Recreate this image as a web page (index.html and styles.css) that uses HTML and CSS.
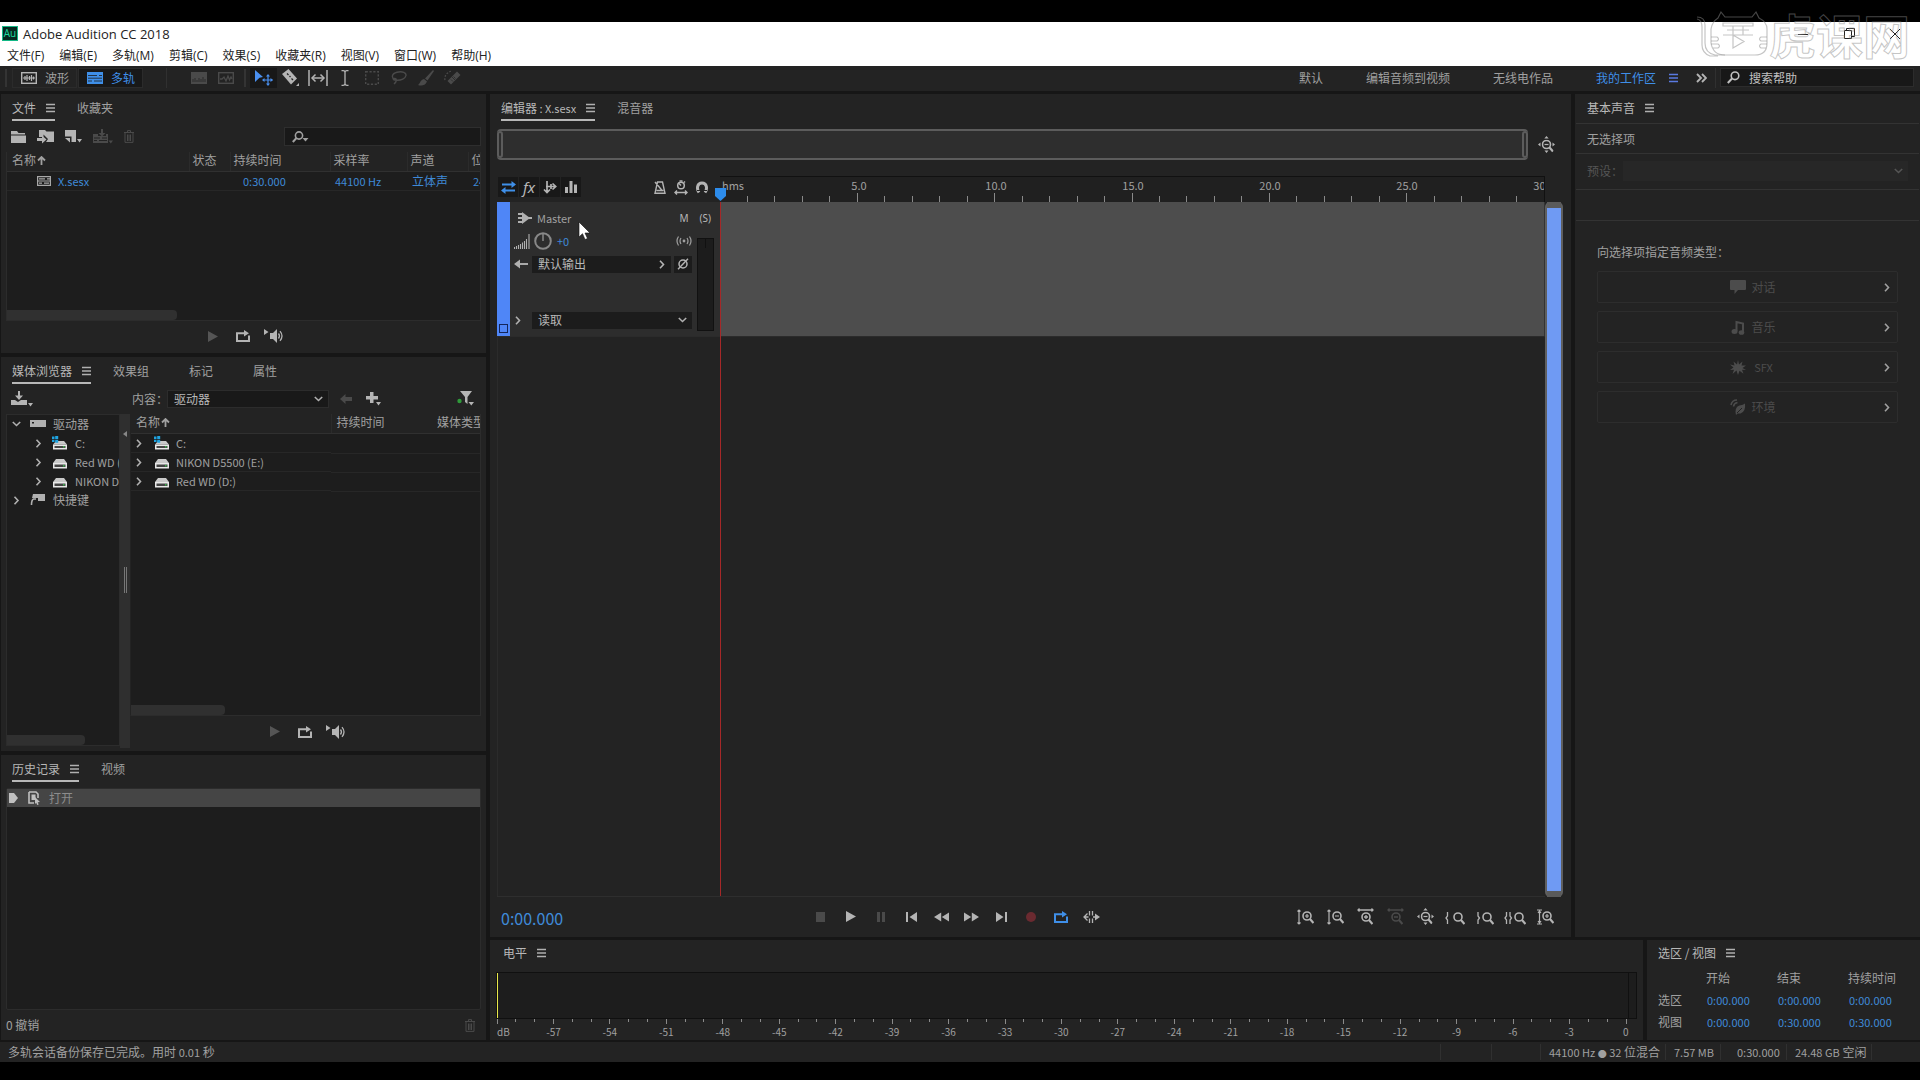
FILE: index.html
```html
<!DOCTYPE html>
<html lang="zh-CN">
<head>
<meta charset="utf-8">
<title>Adobe Audition CC 2018</title>
<link rel="stylesheet" href="styles.css">
</head>
<body>
<svg class="sprite" aria-hidden="true">
  <symbol id="i-menu" viewBox="0 0 9 10"><path d="M0 1.5h9M0 5h9M0 8.5h9" stroke="currentColor" stroke-width="1.6"/></symbol>
  <symbol id="i-wave" viewBox="0 0 16 12"><rect x=".7" y=".7" width="14.6" height="10.6" fill="none" stroke="currentColor" stroke-width="1.4"/><path d="M2 6h12M4 4v4M6 3v6M8.500 4v4M10.500 3v6M12.500 4.500v3" stroke="currentColor" stroke-width="1.200"/></symbol>
  <symbol id="i-multi" viewBox="0 0 16 12"><path fill="currentColor" d="M0 0h16v12H0z"/><path d="M1 3.500h9M12 3.500h3M1 6.200h14M1 9h4M7 9h8" stroke="#1b1b1b" stroke-width=".8"/></symbol>
  <symbol id="i-session" viewBox="0 0 14 10"><path d="M0 .6h14M0 9.400h14M.6 0v10M13.400 0v10M1 5h12M2 2.800h6M10 2.800h3M2 7.200h3M7 7.200h5" stroke="currentColor" stroke-width="1.200"/></symbol>
  <symbol id="i-spectral" viewBox="0 0 16 12"><rect x="0" y="0" width="16" height="12" fill="currentColor"/><path d="M2 7v3M4 6v4M6 8v2M8 6v4M10 7v3M12 5v5M14 7v3" stroke="#232323" stroke-width=".8"/></symbol>
  <symbol id="i-pitch" viewBox="0 0 16 12"><rect x=".7" y=".7" width="14.600" height="10.600" fill="none" stroke="currentColor" stroke-width="1.400"/><path d="M2 7h2l2-2 2 4 2-5 1.500 4L13 5l1 2" fill="none" stroke="currentColor" stroke-width="1.300"/></symbol>
  <symbol id="i-move" viewBox="0 0 18 16"><path fill="currentColor" d="M0 0l8 7-3.500.8L0 12z"/><path d="M13 5.500v9M8.500 10h9" stroke="currentColor" stroke-width="1.200"/><path fill="currentColor" d="M13 4l2 2.500h-4zM13 16l2-2.500h-4zM7 10l2.500-2v4zM18 10l-2.500-2v4z"/></symbol>
  <symbol id="i-razor" viewBox="0 0 17 17"><path fill="currentColor" d="M0 5l6.500-5L15 9.500 9 15.500z"/><path d="M5 4.500l1.500 1.500M7.500 7l1 1M9.500 9.500l1.500 1.500" stroke="#232323" stroke-width="1.300"/><path fill="currentColor" d="M17 14v3h-3z"/></symbol>
  <symbol id="i-stretch" viewBox="0 0 20 16"><path d="M1 0v16M19 0v16M4 8h12" stroke="currentColor" stroke-width="1.500"/><path d="M7.500 4.500L4 8l3.500 3.500M12.500 4.500L16 8l-3.500 3.500" fill="none" stroke="currentColor" stroke-width="1.500"/></symbol>
  <symbol id="i-ibeam" viewBox="0 0 8 16"><path d="M.5.7h1.700Q4 .7 4 2.500 4 .7 5.800.7h1.700M4 2v12M.5 15.300h1.700Q4 15.300 4 13.500q0 1.800 1.800 1.800h1.700" fill="none" stroke="currentColor" stroke-width="1.300"/></symbol>
  <symbol id="i-marquee" viewBox="0 0 14 14"><rect x=".7" y=".7" width="12.600" height="12.600" fill="none" stroke="currentColor" stroke-width="1.400" stroke-dasharray="2.200 1.600"/></symbol>
  <symbol id="i-lasso" viewBox="0 0 16 14"><path d="M4 9C0 7 .5 2.500 6 1.200s9.500.5 9 3.300-5 5-9.500 4.700-3.500-2-1.500-1.700 2 3-1 5.500" fill="none" stroke="currentColor" stroke-width="1.400"/></symbol>
  <symbol id="i-brush" viewBox="0 0 16 16"><path fill="currentColor" d="M15 0l1 1-6.500 9.500-2.500-2zM6 9l3 2.500C7 16 3 16 0 15c2-1 2-5 6-6z"/></symbol>
  <symbol id="i-heal" viewBox="0 0 17 16"><path fill="currentColor" d="M13 1.500l3.500 3.500-9.500 9.500L3.500 11z"/><path d="M1 10C0 6 3 2 8 1" fill="none" stroke="currentColor" stroke-width="1.300" stroke-dasharray="1.800 1.500"/><path d="M8 7l3 3M7 9.500l2 2M9.500 6.500l2 2" stroke="#232323" stroke-width=".7"/></symbol>
  <symbol id="i-more" viewBox="0 0 11 10"><path d="M1 1l4 4-4 4M6 1l4 4-4 4" fill="none" stroke="currentColor" stroke-width="1.900"/></symbol>
  <symbol id="i-search" viewBox="0 0 13 13"><circle cx="8" cy="4.800" r="3.800" fill="none" stroke="currentColor" stroke-width="1.600"/><path d="M5 7.500L.8 12" stroke="currentColor" stroke-width="2"/></symbol>
  <symbol id="i-search-drop" viewBox="0 0 17 12"><circle cx="7" cy="4.500" r="3.600" fill="none" stroke="currentColor" stroke-width="1.600"/><path d="M4.500 7L.8 11" stroke="currentColor" stroke-width="2"/><path fill="currentColor" d="M10.500 7h6l-3 3.500z"/></symbol>
  <symbol id="i-folder" viewBox="0 0 15 12"><path fill="currentColor" d="M0 0h6l1.500 2H14v1.500H0zM0 4.500h15V12H0z"/></symbol>
  <symbol id="i-import" viewBox="0 0 17 14"><path fill="currentColor" d="M2 0h6l1.500 1.500H17V12H9l2-3-4.500-4.500V7H2z"/><path fill="currentColor" d="M0 8h5V5.500L9.500 9.500 5 13.500V11H0z"/></symbol>
  <symbol id="i-new" viewBox="0 0 17 13"><path fill="currentColor" d="M0 0h11v12H6.500V6.500H0z"/><path fill="currentColor" d="M0 8h5v4.500zM12 9h5l-2.500 3.500z"/></symbol>
  <symbol id="i-insert" viewBox="0 0 20 15"><path fill="currentColor" d="M0 5h5v2h8V5h2v9H0zM8 0h2v4h2.500L9 7.500 5.500 4H8zM15.500 11.500H20L17.800 14.500z"/><path d="M1 9h6M9 9h5M1 11.500h3M6 11.500h8" stroke="#232323"/></symbol>
  <symbol id="i-trash" viewBox="0 0 10 13"><path d="M0 2.500h10M3.500 2V.6h3V2M1 3v9.400h8V3M3.500 4.500v6.500M5 4.500v6.500M6.500 4.500v6.500" fill="none" stroke="currentColor" stroke-width="1"/></symbol>
  <symbol id="i-up" viewBox="0 0 9 9"><path d="M4.500 9V2M1 4.500L4.500 1 8 4.500" fill="none" stroke="currentColor" stroke-width="1.800"/></symbol>
  <symbol id="i-play" viewBox="0 0 10 11"><path fill="currentColor" d="M0 0l10 5.500L0 11z"/></symbol>
  <symbol id="i-loop" viewBox="0 0 14 12"><path d="M4 3.200H1V11h12V5.500" fill="none" stroke="currentColor" stroke-width="2"/><path fill="currentColor" d="M4 2.200h4V0l5 3.200-5 3.200V4.200H4z"/></symbol>
  <symbol id="i-speaker" viewBox="0 0 21 14"><path fill="currentColor" d="M0 0l4.500 3L0 6zM6 4h3l4-4v14l-4-4H6z"/><path d="M14.500 4.500q2 2.500 0 5M16 2.200q4 4.800 0 9.600M15 11" fill="none" stroke="currentColor" stroke-width="1.300"/></symbol>
  <symbol id="i-ingest" viewBox="0 0 22 16"><path fill="currentColor" d="M0 9h4l3 2 3-2h6v5H0zM7 0h2v4.500h3L8 9 4 4.500h3zM17 12h5l-2.500 3.500z"/></symbol>
  <symbol id="i-back" viewBox="0 0 12 10"><path fill="currentColor" d="M5.500 0v3H12v4H5.500v3L0 5z"/></symbol>
  <symbol id="i-plus" viewBox="0 0 15 14"><path fill="currentColor" d="M4 0h3.500v4H12v3.500H7.500V11H4V7.500H0V4h4zM10 10h5l-2.500 3.500z"/></symbol>
  <symbol id="i-filter" viewBox="0 0 17 15"><path fill="currentColor" d="M3 0h12l-4.500 6v7l-2.500-2V6zM11.500 11H17l-2.700 3.500z"/><circle cx="2.500" cy="10" r="2.200" fill="#2f9a3a"/></symbol>
  <symbol id="i-chev-r" viewBox="0 0 6 9"><path d="M1 .8l3.500 3.700L1 8.200" fill="none" stroke="currentColor" stroke-width="1.600"/></symbol>
  <symbol id="i-chev-d" viewBox="0 0 9 6"><path d="M.8 1l3.700 3.500L8.200 1" fill="none" stroke="currentColor" stroke-width="1.600"/></symbol>
  <symbol id="i-drives" viewBox="0 0 16 12"><path fill="currentColor" d="M0 2h16v7H0z"/><path fill="#1d1d1d" d="M2 4h2v1.500H2z"/></symbol>
  <symbol id="i-disk" viewBox="0 0 16 14"><path fill="#c9c9c9" d="M4 4h8l3 4H1z"/><path fill="#e8e8e8" d="M1 8h14v5.500H1z"/><path fill="#444" d="M2.500 9.500h11v2.500h-11z"/><path fill="#39b54a" d="M11 10h1.500v1.500H11z"/></symbol>
  <symbol id="i-disk-win" viewBox="0 0 16 14"><path fill="#c9c9c9" d="M4 5h8l3 3.500H1z"/><path fill="#e8e8e8" d="M1 8.500h14v5H1z"/><path fill="#444" d="M2.500 10h11v2h-11z"/><path fill="#39b54a" d="M11 10h1.500v1.500H11z"/><path fill="#1fa3e0" d="M0 .5h2.500v2.500H0zM3.200 0h3v3h-3zM0 3.700h2.500v2.300H0zM3.200 3.700h3v3h-3z"/></symbol>
  <symbol id="i-shortcut" viewBox="0 0 16 14"><path fill="currentColor" d="M3 1h12v7H8V5L2 5z"/><path d="M6 6H3.500Q1.500 7 1.500 12" fill="none" stroke="currentColor" stroke-width="1.600"/></symbol>
  <symbol id="i-state" viewBox="0 0 9 10"><path fill="currentColor" d="M0 0h5l4 5-4 5H0z"/></symbol>
  <symbol id="i-open" viewBox="0 0 13 14"><path d="M1 1h7l2 2v4M1 1v11h5" fill="none" stroke="currentColor" stroke-width="1.600"/><path d="M3.500 3.500h4V9h-4z" fill="currentColor"/><path fill="currentColor" d="M7 6l5 5-2.300.2 1 2.300-1.500.5-1-2.300L7 13z"/></symbol>
  <symbol id="i-swap" viewBox="0 0 15 13"><path d="M1 3.500h11M3 9.500h11" stroke="currentColor" stroke-width="1.800"/><path fill="currentColor" d="M10.500 0L15 3.500 10.500 7zM4.500 6L0 9.500 4.500 13z"/></symbol>
  <symbol id="i-sends" viewBox="0 0 14 13"><path d="M4 0v11M3 5.500h9M1 8.500l3 3 3-3M9.500 2.500l3.200 3-3.200 3M8 3v5" fill="none" stroke="currentColor" stroke-width="1.700"/></symbol>
  <symbol id="i-bars" viewBox="0 0 12 12"><path fill="currentColor" d="M0 6h3v6H0zM4.500 0h3v12h-3zM9 3.500h3V12H9z"/></symbol>
  <symbol id="i-metro" viewBox="0 0 12 13"><path d="M3.500 1h5L11 12.200H1zM1 1l7.500 9M2.500 9.500h7" fill="none" stroke="currentColor" stroke-width="1.400"/></symbol>
  <symbol id="i-snaptime" viewBox="0 0 14 15"><circle cx="7" cy="5.500" r="3.300" fill="none" stroke="currentColor" stroke-width="1.500"/><path d="M5.500 1h3M7 5.500l-2-2M1 12.500h12M3 10.500l-2 2 2 2M11 10.500l2 2-2 2M10 1.500l1 1" fill="none" stroke="currentColor" stroke-width="1.400"/></symbol>
  <symbol id="i-magnet" viewBox="0 0 12 13"><path d="M3 11.500C.5 8 1 2 6 2s5.500 6 3 9.500" fill="none" stroke="currentColor" stroke-width="3"/><path d="M1 9.500h4.500M6.500 9.500H11" stroke="#232323"/></symbol>
  <symbol id="i-bus" viewBox="0 0 14 12"><path d="M0 2h5M0 6h14M0 10h5" stroke="currentColor" stroke-width="1.900"/><path fill="currentColor" d="M4 0l8 6-8 6z"/></symbol>
  <symbol id="i-signal" viewBox="0 0 16 15"><path d="M.5 13v2M2.500 12v3M4.500 11v4M6.500 10v5M8.500 8.500V15M10.500 7v8M12.500 5v10M15 0v15" stroke="currentColor" stroke-width="1.100"/></symbol>
  <symbol id="i-knob" viewBox="0 0 18 18"><circle cx="9" cy="9" r="7.800" fill="none" stroke="currentColor" stroke-width="2"/><path d="M9 2v7" stroke="currentColor" stroke-width="1.500"/></symbol>
  <symbol id="i-arrow-l" viewBox="0 0 14 10"><path d="M2 5h12" stroke="currentColor" stroke-width="1.900"/><path fill="currentColor" d="M6 .5v9L0 5z"/></symbol>
  <symbol id="i-monitor" viewBox="0 0 16 10"><circle cx="8" cy="5" r="1.400" fill="currentColor"/><path d="M5 2q-2 3 0 6M11 2q2 3 0 6M2.500.5q-3 4.500 0 9M13.500.5q3 4.500 0 9" fill="none" stroke="currentColor" stroke-width="1.200"/></symbol>
  <symbol id="i-phase" viewBox="0 0 12 12"><circle cx="6" cy="6" r="4" fill="none" stroke="currentColor" stroke-width="1.500"/><path d="M11 .8L1 11.200" stroke="currentColor" stroke-width="1.400"/></symbol>
  <symbol id="i-stop" viewBox="0 0 10 10"><path fill="currentColor" d="M0 0h9v10H0z"/></symbol>
  <symbol id="i-pause" viewBox="0 0 9 10"><path fill="currentColor" d="M0 0h3v10H0zM5 0h3v10H5z"/></symbol>
  <symbol id="i-first" viewBox="0 0 11 10"><path fill="currentColor" d="M0 0h2v10H0zM11 0v10L3.500 5z"/></symbol>
  <symbol id="i-last" viewBox="0 0 11 10"><path fill="currentColor" d="M9 0h2v10H9zM0 0l7.500 5L0 10z"/></symbol>
  <symbol id="i-rew" viewBox="0 0 15 10"><path fill="currentColor" d="M7.200 .5v9L0 5zM15 .5v9L7.800 5z"/></symbol>
  <symbol id="i-ff" viewBox="0 0 15 10"><path fill="currentColor" d="M0 .5v9L7.200 5zM7.800 .5v9L15 5z"/></symbol>
  <symbol id="i-rec" viewBox="0 0 10 10"><circle cx="5" cy="5" r="5" fill="currentColor"/></symbol>
  <symbol id="i-skip" viewBox="0 0 17 12"><path d="M6.500 0v4.500M6.500 7.500V12M9.500 0v4.500M9.500 7.500V12M4.500 2.500L1 6l3.500 3.500M1 6h4.500M10 6h4" fill="none" stroke="currentColor" stroke-width="1.300"/><path fill="currentColor" d="M12 2.500L17 6l-5 3.500z"/></symbol>
  <symbol id="i-lens" viewBox="0 0 12 13"><circle cx="5" cy="5" r="4" fill="none" stroke="currentColor" stroke-width="1.600"/><path d="M8 8l3.500 4" stroke="currentColor" stroke-width="2.200"/></symbol>
  <symbol id="i-zin-v" viewBox="0 0 17 16"><use href="#i-lens" x="5" y="2" width="12" height="13"/><path d="M8 7h4M10 5v4M2 1v14M.5 2.500L2 1l1.500 1.500M.5 13.500L2 15l1.500-1.500" fill="none" stroke="currentColor" stroke-width="1.200"/></symbol>
  <symbol id="i-zout-v" viewBox="0 0 17 16"><use href="#i-lens" x="5" y="2" width="12" height="13"/><path d="M8 7h4M2 1v14M.5 2.500L2 1l1.500 1.500M.5 13.500L2 15l1.500-1.500" fill="none" stroke="currentColor" stroke-width="1.200"/></symbol>
  <symbol id="i-zin-h" viewBox="0 0 17 17"><use href="#i-lens" x="4" y="4" width="12" height="13"/><path d="M7 9h4M9 7v4M1 2h15M2.500.5L1 2l1.500 1.500M14.500.5L16 2l-1.500 1.500" fill="none" stroke="currentColor" stroke-width="1.300"/></symbol>
  <symbol id="i-zout-h" viewBox="0 0 17 17"><use href="#i-lens" x="4" y="4" width="12" height="13"/><path d="M7 9h4M1 2h15M2.500.5L1 2l1.500 1.500M14.500.5L16 2l-1.500 1.500" fill="none" stroke="currentColor" stroke-width="1.300"/></symbol>
  <symbol id="i-zfull" viewBox="0 0 17 17"><use href="#i-lens" x="3.500" y="3.500" width="12" height="13"/><path d="M6.500 8.500h4" stroke="currentColor" stroke-width="1.200"/><path fill="currentColor" d="M8.500 0l2.200 2.500H6.300zM8.500 17l2-2.500h-4zM0 8.500L2.500 6.500v4zM17 8.500l-2.500-2v4z"/></symbol>
  <symbol id="i-zin-pt" viewBox="0 0 20 16"><use href="#i-lens" x="8" y="3" width="12" height="13"/><path d="M2.500 3v4L1 9l1.500 2v4" fill="none" stroke="currentColor" stroke-width="1.300"/></symbol>
  <symbol id="i-zout-pt" viewBox="0 0 17 16"><use href="#i-lens" x="5" y="3" width="12" height="13"/><path d="M1 3v4l1.500 2L1 11v4" fill="none" stroke="currentColor" stroke-width="1.300"/></symbol>
  <symbol id="i-zsel" viewBox="0 0 22 16"><use href="#i-lens" x="10" y="3" width="12" height="13"/><path d="M2.500 3v4L1 9l1.500 2v4M6 3v4l1.500 2L6 11v4" fill="none" stroke="currentColor" stroke-width="1.300"/></symbol>
  <symbol id="i-ztrack" viewBox="0 0 17 16"><use href="#i-lens" x="5" y="2" width="12" height="13"/><path d="M8 7h4M10 5v4M2.500 1v14M0 1h5M0 15h5M1 4l1.500-2L4 4M1 12l1.500 2L4 12" fill="none" stroke="currentColor" stroke-width="1.200"/></symbol>
  <symbol id="i-bubble" viewBox="0 0 16 15"><path fill="currentColor" d="M1 0h14q1 0 1 1v8q0 1-1 1H8l-3.500 4V10H1q-1 0-1-1V1q0-1 1-1z"/></symbol>
  <symbol id="i-music" viewBox="0 0 16 15"><path d="M6.500 11V2L13 3.500v8" fill="none" stroke="currentColor" stroke-width="2"/><ellipse cx="4.500" cy="11.500" rx="3" ry="2.500" fill="currentColor"/><ellipse cx="11.500" cy="12.500" rx="2.800" ry="2.300" fill="currentColor"/></symbol>
  <symbol id="i-burst" viewBox="0 0 16 15"><path fill="currentColor" d="M8 0l1 4.500L12.500 1.500 11.500 5.500 16 5.500l-3.500 2.500L16 10l-4-.3 1.500 4-4-3L8 15l-1.500-4.500L2.500 14 4 9.700 0 10l3.500-2.500L0 4.500l4.500 1L3.500 1.500 7 4.500z"/></symbol>
  <symbol id="i-leaf" viewBox="0 0 16 16"><path d="M1 6q1-5 6-5M3.500 7.500q.5-3.500 4-4" fill="none" stroke="currentColor" stroke-width="1.600"/><path fill="currentColor" d="M15 4.500q1 8-4.500 10H7.500L6 16l-.5-3q0-5.500 4-6.500Q13.500 6 15 4.500z"/><path d="M7 14l5-5" stroke="#232323"/></symbol>
</svg>

<div class="app">
  <header class="titlebar">
    <div class="title"><span class="logo">Au</span><h1>Adobe Audition CC 2018</h1></div>
    <div class="winbtns">
      <button aria-label="最小化"><svg width="10" height="10" viewBox="0 0 10 10"><path d="M0 5.500h10" stroke="#222"/></svg></button>
      <button aria-label="还原"><svg width="11" height="11" viewBox="0 0 11 11"><path d="M.5 2.500h7v8h-7zM2.500 2.500v-2h8v8h-3" fill="none" stroke="#222"/></svg></button>
      <button aria-label="关闭"><svg width="10" height="10" viewBox="0 0 10 10"><path d="M0 0l10 10M10 0L0 10" stroke="#222"/></svg></button>
    </div>
  </header>
  <nav class="menubar">
    <button>文件(F)</button><button>编辑(E)</button><button>多轨(M)</button><button>剪辑(C)</button><button>效果(S)</button><button>收藏夹(R)</button><button>视图(V)</button><button>窗口(W)</button><button>帮助(H)</button>
  </nav>

  <div class="toolbar">
    <i class="grip"></i>
    <div class="modes">
      <button class="mode"><svg width="16" height="12"><use href="#i-wave"/></svg>波形</button>
      <button class="mode on"><svg width="16" height="12"><use href="#i-multi"/></svg>多轨</button>
    </div>
    <i class="vsep wide"></i>
    <div class="tools views">
      <button class="dim" aria-label="频谱"><svg width="16" height="12"><use href="#i-spectral"/></svg></button>
      <button class="dim" aria-label="音高"><svg width="16" height="12"><use href="#i-pitch"/></svg></button>
    </div>
    <i class="grip"></i>
    <div class="tools">
      <button class="on" aria-label="移动"><svg width="18" height="16"><use href="#i-move"/></svg></button>
      <button aria-label="切断"><svg width="17" height="17"><use href="#i-razor"/></svg></button>
      <button aria-label="滑动"><svg width="20" height="16"><use href="#i-stretch"/></svg></button>
      <button aria-label="时间选择"><svg width="8" height="16"><use href="#i-ibeam"/></svg></button>
      <button class="dim" aria-label="框选"><svg width="14" height="14"><use href="#i-marquee"/></svg></button>
      <button class="dim" aria-label="套索"><svg width="16" height="14"><use href="#i-lasso"/></svg></button>
      <button class="dim" aria-label="画笔"><svg width="16" height="16"><use href="#i-brush"/></svg></button>
      <button class="dim" aria-label="污点修复"><svg width="17" height="16"><use href="#i-heal"/></svg></button>
    </div>
    <div class="workspaces">
      <button>默认</button><button>编辑音频到视频</button><button>无线电作品</button>
      <button class="on">我的工作区<svg width="9" height="10"><use href="#i-menu"/></svg></button>
    </div>
    <button class="more" aria-label="更多"><svg width="11" height="10"><use href="#i-more"/></svg></button>
    <i class="vsep"></i>
    <label class="help-search"><svg width="13" height="13"><use href="#i-search"/></svg><input type="text" placeholder="搜索帮助" aria-label="搜索帮助"></label>
  </div>

  <main class="workspace">
    <div class="left">
      <section class="panel files">
        <div class="tabs"><button class="tab on">文件<svg width="9" height="10"><use href="#i-menu"/></svg></button><button class="tab">收藏夹</button></div>
        <div class="bar">
          <div class="bar-icons">
            <button aria-label="打开"><svg width="15" height="12"><use href="#i-folder"/></svg></button>
            <button aria-label="导入"><svg width="17" height="14"><use href="#i-import"/></svg></button>
            <button aria-label="新建"><svg width="17" height="13"><use href="#i-new"/></svg></button>
            <button class="dim" aria-label="插入"><svg width="20" height="15"><use href="#i-insert"/></svg></button>
            <button class="dim" aria-label="删除"><svg width="10" height="13"><use href="#i-trash"/></svg></button>
          </div>
          <label class="file-search"><svg width="17" height="12"><use href="#i-search-drop"/></svg><input type="text" aria-label="搜索文件"></label>
        </div>
        <div class="list file-list">
          <table>
            <colgroup><col class="c-name"><col class="c-state"><col class="c-time"><col class="c-rate"><col class="c-chan"><col></colgroup>
            <thead><tr><th>名称<svg width="9" height="9"><use href="#i-up"/></svg></th><th>状态</th><th>持续时间</th><th>采样率</th><th>声道</th><th>位</th></tr></thead>
            <tbody><tr><td class="fname"><svg width="14" height="10"><use href="#i-session"/></svg><span>X.sesx</span></td><td></td><td class="num">0:30.000</td><td class="num">44100 Hz</td><td>立体声</td><td class="num">24</td></tr></tbody>
          </table>
          <i class="hscroll"></i>
        </div>
        <div class="preview">
          <button class="dim" aria-label="播放"><svg width="10" height="11"><use href="#i-play"/></svg></button>
          <button aria-label="循环"><svg width="14" height="12"><use href="#i-loop"/></svg></button>
          <button aria-label="自动播放"><svg width="21" height="14"><use href="#i-speaker"/></svg></button>
        </div>
      </section>

      <section class="panel media">
        <div class="tabs"><button class="tab on">媒体浏览器<svg width="9" height="10"><use href="#i-menu"/></svg></button><button class="tab">效果组</button><button class="tab">标记</button><button class="tab">属性</button></div>
        <div class="bar media-bar">
          <button class="ingest" aria-label="导入"><svg width="22" height="16"><use href="#i-ingest"/></svg></button>
          <label for="drive">内容：</label>
          <span class="select"><select id="drive"><option>驱动器</option></select><svg width="9" height="6"><use href="#i-chev-d"/></svg></span>
          <button class="dim" aria-label="后退"><svg width="12" height="10"><use href="#i-back"/></svg></button>
          <button aria-label="添加"><svg width="15" height="14"><use href="#i-plus"/></svg></button>
          <button class="filter" aria-label="过滤"><svg width="17" height="15"><use href="#i-filter"/></svg></button>
        </div>
        <div class="split">
          <div class="tree">
            <ul>
              <li class="top"><svg class="tw" width="9" height="6"><use href="#i-chev-d"/></svg><svg width="16" height="12"><use href="#i-drives"/></svg><span>驱动器</span></li>
              <li class="sub"><svg class="tw" width="6" height="9"><use href="#i-chev-r"/></svg><svg width="16" height="14"><use href="#i-disk-win"/></svg><span class="lat">C:</span></li>
              <li class="sub"><svg class="tw" width="6" height="9"><use href="#i-chev-r"/></svg><svg width="16" height="14"><use href="#i-disk"/></svg><span class="lat">Red WD (D:)</span></li>
              <li class="sub"><svg class="tw" width="6" height="9"><use href="#i-chev-r"/></svg><svg width="16" height="14"><use href="#i-disk"/></svg><span class="lat">NIKON D5500 (E:)</span></li>
              <li class="top"><svg class="tw" width="6" height="9"><use href="#i-chev-r"/></svg><svg width="16" height="14"><use href="#i-shortcut"/></svg><span>快捷键</span></li>
            </ul>
            <i class="hscroll"></i>
          </div>
          <div class="divider"><svg width="4" height="6" viewBox="0 0 4 6"><path fill="#888" d="M4 0v6L0 3z"/></svg><i></i></div>
          <div class="drives">
            <div class="list drive-list">
              <table>
                <colgroup><col class="d-name"><col class="d-time"><col></colgroup>
                <thead><tr><th>名称<svg width="9" height="9"><use href="#i-up"/></svg></th><th>持续时间</th><th>媒体类型</th></tr></thead>
                <tbody>
                  <tr><td class="drive"><svg width="6" height="9"><use href="#i-chev-r"/></svg><svg width="16" height="14"><use href="#i-disk-win"/></svg><span>C:</span></td><td></td><td></td></tr>
                  <tr><td class="drive"><svg width="6" height="9"><use href="#i-chev-r"/></svg><svg width="16" height="14"><use href="#i-disk"/></svg><span>NIKON D5500 (E:)</span></td><td></td><td></td></tr>
                  <tr><td class="drive"><svg width="6" height="9"><use href="#i-chev-r"/></svg><svg width="16" height="14"><use href="#i-disk"/></svg><span>Red WD (D:)</span></td><td></td><td></td></tr>
                </tbody>
              </table>
              <i class="hscroll"></i>
            </div>
            <div class="preview">
              <button class="dim" aria-label="播放"><svg width="10" height="11"><use href="#i-play"/></svg></button>
              <button aria-label="循环"><svg width="14" height="12"><use href="#i-loop"/></svg></button>
              <button aria-label="自动播放"><svg width="21" height="14"><use href="#i-speaker"/></svg></button>
            </div>
          </div>
        </div>
      </section>

      <section class="panel history">
        <div class="tabs"><button class="tab on">历史记录<svg width="9" height="10"><use href="#i-menu"/></svg></button><button class="tab">视频</button></div>
        <ul class="history-list"><li><svg width="9" height="10"><use href="#i-state"/></svg><svg width="13" height="14"><use href="#i-open"/></svg><span>打开</span></li></ul>
        <div class="undo"><span>0 撤销</span><button class="dim" aria-label="删除"><svg width="10" height="13"><use href="#i-trash"/></svg></button></div>
      </section>
    </div>

    <div class="right">
      <div class="upper">
        <section class="panel editor">
          <div class="tabs"><button class="tab on"><span>编辑器<span class="lat"> : X.sesx</span></span><svg width="9" height="10"><use href="#i-menu"/></svg></button><button class="tab">混音器</button></div>
          <div class="navrow">
            <div class="navigator"><i></i><i></i></div>
            <button aria-label="全部缩小"><svg width="17" height="17"><use href="#i-zfull"/></svg></button>
          </div>
          <div class="session">
            <div class="tracks">
              <div class="head">
                <div class="track-tools">
                  <button class="blue" aria-label="输入输出"><svg width="15" height="13"><use href="#i-swap"/></svg></button>
                  <button class="fx" aria-label="效果">fx</button>
                  <button aria-label="发送"><svg width="14" height="13"><use href="#i-sends"/></svg></button>
                  <button aria-label="EQ"><svg width="12" height="12"><use href="#i-bars"/></svg></button>
                </div>
                <div class="snap-tools">
                  <button aria-label="节拍器"><svg width="12" height="13"><use href="#i-metro"/></svg></button>
                  <button aria-label="时间"><svg width="14" height="15"><use href="#i-snaptime"/></svg></button>
                  <button aria-label="对齐"><svg width="12" height="13"><use href="#i-magnet"/></svg></button>
                </div>
              </div>
              <div class="ruler">
                <div class="labels"><span class="hms">hms</span><span>5.0</span><span>10.0</span><span>15.0</span><span>20.0</span><span>25.0</span><span>30.0</span></div>
                <svg class="ticks" viewBox="0 0 30 8" preserveAspectRatio="none"><path d="M1 3v5M2 3v5M3 3v5M4 3v5M5 0v8M6 3v5M7 3v5M8 3v5M9 3v5M10 0v8M11 3v5M12 3v5M13 3v5M14 3v5M15 0v8M16 3v5M17 3v5M18 3v5M19 3v5M20 0v8M21 3v5M22 3v5M23 3v5M24 3v5M25 0v8M26 3v5M27 3v5M28 3v5M29 3v5"/></svg>
              </div>
              <div class="track">
                <div class="stripe"><i></i></div>
                <div class="track-ctl">
                  <div class="line"><svg width="14" height="12"><use href="#i-bus"/></svg><span class="tname">Master</span><button class="ms">M</button><button class="ms">(S)</button></div>
                  <div class="body">
                    <div class="ctl-rows">
                      <div class="line vol"><svg width="16" height="15"><use href="#i-signal"/></svg><svg width="18" height="18"><use href="#i-knob"/></svg><span class="gain">+0</span><svg class="end" width="16" height="10"><use href="#i-monitor"/></svg></div>
                      <div class="line"><svg width="14" height="10"><use href="#i-arrow-l"/></svg><button class="field">默认输出<svg width="6" height="9"><use href="#i-chev-r"/></svg></button><button class="phase" aria-label="反相"><svg width="12" height="12"><use href="#i-phase"/></svg></button></div>
                      <div class="line auto"><svg class="exp" width="6" height="9"><use href="#i-chev-r"/></svg><span class="select"><select aria-label="自动化模式"><option>读取</option></select><svg width="9" height="6"><use href="#i-chev-d"/></svg></span></div>
                    </div>
                    <div class="vu"><i></i></div>
                  </div>
                </div>
              </div>
              <div class="lane"></div>
              <div class="void"></div>
              <div class="timeline"></div>
              <div class="playhead"><svg width="11" height="13" viewBox="0 0 11 13"><path fill="#2d8ceb" d="M0 0h11v8l-5.500 5L0 8z"/></svg></div>
            </div>
            <div class="vscroll"><i></i><i></i></div>
          </div>
          <div class="transport">
            <output>0:00.000</output>
            <div class="play-btns">
              <button class="dim" aria-label="停止"><svg width="10" height="10"><use href="#i-stop"/></svg></button>
              <button aria-label="播放"><svg width="10" height="11"><use href="#i-play"/></svg></button>
              <button class="dim" aria-label="暂停"><svg width="9" height="10"><use href="#i-pause"/></svg></button>
              <button aria-label="上一个"><svg width="11" height="10"><use href="#i-first"/></svg></button>
              <button aria-label="快退"><svg width="15" height="10"><use href="#i-rew"/></svg></button>
              <button aria-label="快进"><svg width="15" height="10"><use href="#i-ff"/></svg></button>
              <button aria-label="下一个"><svg width="11" height="10"><use href="#i-last"/></svg></button>
              <button class="rec" aria-label="录制"><svg width="10" height="10"><use href="#i-rec"/></svg></button>
              <button class="blue" aria-label="循环播放"><svg width="14" height="12"><use href="#i-loop"/></svg></button>
              <button aria-label="跳过所选"><svg width="17" height="12"><use href="#i-skip"/></svg></button>
            </div>
            <div class="zoom-btns">
              <button aria-label="放大振幅"><svg width="17" height="16"><use href="#i-zin-v"/></svg></button>
              <button aria-label="缩小振幅"><svg width="17" height="16"><use href="#i-zout-v"/></svg></button>
              <button aria-label="放大时间"><svg width="17" height="17"><use href="#i-zin-h"/></svg></button>
              <button class="dim" aria-label="缩小时间"><svg width="17" height="17"><use href="#i-zout-h"/></svg></button>
              <button aria-label="全部缩小"><svg width="17" height="17"><use href="#i-zfull"/></svg></button>
              <button aria-label="放大入点"><svg width="20" height="16"><use href="#i-zin-pt"/></svg></button>
              <button aria-label="放大出点"><svg width="17" height="16"><use href="#i-zout-pt"/></svg></button>
              <button aria-label="缩放至选区"><svg width="22" height="16"><use href="#i-zsel"/></svg></button>
              <button aria-label="缩放所选音轨"><svg width="17" height="16"><use href="#i-ztrack"/></svg></button>
            </div>
          </div>
          <svg class="cursor" width="13" height="20" viewBox="0 0 13 20"><path fill="#fff" stroke="#111" stroke-width=".6" d="M1 1v15l3.500-3.300L7 18.500l2.500-1L7 12h5z"/></svg>
        </section>

        <section class="panel sound">
          <div class="tabs"><button class="tab">基本声音<svg width="9" height="10"><use href="#i-menu"/></svg></button></div>
          <div class="nosel">无选择项</div>
          <div class="preset"><label for="preset">预设：</label><span class="select"><select id="preset" disabled></select><svg width="9" height="6"><use href="#i-chev-d"/></svg></span></div>
          <div class="blank"></div>
          <div class="types">
            <p>向选择项指定音频类型：</p>
            <button><svg width="16" height="15"><use href="#i-bubble"/></svg><span>对话</span><svg class="go" width="6" height="9"><use href="#i-chev-r"/></svg></button>
            <button><svg width="16" height="15"><use href="#i-music"/></svg><span>音乐</span><svg class="go" width="6" height="9"><use href="#i-chev-r"/></svg></button>
            <button><svg width="16" height="15"><use href="#i-burst"/></svg><span class="lat">SFX</span><svg class="go" width="6" height="9"><use href="#i-chev-r"/></svg></button>
            <button><svg width="16" height="16"><use href="#i-leaf"/></svg><span>环境</span><svg class="go" width="6" height="9"><use href="#i-chev-r"/></svg></button>
          </div>
        </section>
      </div>

      <div class="lower">
        <section class="panel levels">
          <div class="tabs"><button class="tab">电平<svg width="9" height="10"><use href="#i-menu"/></svg></button></div>
          <div class="meter"><i class="peak"></i><i class="clip"></i></div>
          <div class="scale">
            <svg class="ticks" viewBox="0 0 60 5" preserveAspectRatio="none"><path d="M0 0v5M1 0v3M2 0v3M3 0v5M4 0v3M5 0v3M6 0v5M7 0v3M8 0v3M9 0v5M10 0v3M11 0v3M12 0v5M13 0v3M14 0v3M15 0v5M16 0v3M17 0v3M18 0v5M19 0v3M20 0v3M21 0v5M22 0v3M23 0v3M24 0v5M25 0v3M26 0v3M27 0v5M28 0v3M29 0v3M30 0v5M31 0v3M32 0v3M33 0v5M34 0v3M35 0v3M36 0v5M37 0v3M38 0v3M39 0v5M40 0v3M41 0v3M42 0v5M43 0v3M44 0v3M45 0v5M46 0v3M47 0v3M48 0v5M49 0v3M50 0v3M51 0v5M52 0v3M53 0v3M54 0v5M55 0v3M56 0v3M57 0v5M58 0v3M59 0v3M60 0v5"/></svg>
            <div class="labels"><span class="db">dB</span><span>-57</span><span>-54</span><span>-51</span><span>-48</span><span>-45</span><span>-42</span><span>-39</span><span>-36</span><span>-33</span><span>-30</span><span>-27</span><span>-24</span><span>-21</span><span>-18</span><span>-15</span><span>-12</span><span>-9</span><span>-6</span><span>-3</span><span>0</span></div>
          </div>
        </section>
        <section class="panel selview">
          <div class="tabs"><button class="tab">选区 / 视图<svg width="9" height="10"><use href="#i-menu"/></svg></button></div>
          <table>
            <thead><tr><td></td><th>开始</th><th>结束</th><th>持续时间</th></tr></thead>
            <tbody>
              <tr><th>选区</th><td>0:00.000</td><td>0:00.000</td><td>0:00.000</td></tr>
              <tr><th>视图</th><td>0:00.000</td><td>0:30.000</td><td>0:30.000</td></tr>
            </tbody>
          </table>
        </section>
      </div>
    </div>
  </main>

  <footer class="status">
    <span class="msg">多轨会话备份保存已完成。用时 <span class="lat">0.01</span> 秒</span>
    <span class="cell s1"></span><span class="cell s2"></span>
    <span class="cell s3"><span class="lat">44100 Hz <small>●</small> 32</span> 位混合</span>
    <span class="cell s4 lat">7.57 MB</span>
    <span class="cell s5 lat">0:30.000</span>
    <span class="cell s6"><span class="lat">24.48 GB</span> 空闲</span>
    <span class="cell s7"></span>
  </footer>
</div>

<div class="watermark" aria-hidden="true">
  <svg width="72" height="48" viewBox="0 0 72 48"><g fill="none" stroke="currentColor" stroke-width="1.200"><path d="M0 7q8 0 8 8v18q0 10 10 12h10M0 9q5 1 5 8v18q0 8 8 11h8"/><path d="M21 8l3-6 4 5h27l4-5 3 6q8 4 8 11v14q0 12-12 12H28q-12 0-14-12V19q1-7 7-11z"/><path d="M26 13h30v3H26zM30 20h22M26 25h30M36 16v9M46 16v9M14 27h6q3 2 0 4h-6M14 34h7q3 2 0 4h-5M70 27h-6q-3 2 0 4h6M70 34h-6q-3 2 0 4h5M36 25v13l11-6.500z"/></g></svg>
  <span>虎课网</span>
</div>
</body>
</html>
```

FILE: styles.css
```css
* { box-sizing: border-box; }
body {
  margin: 0;
  background: #000;
  color: #a0a0a0;
  font: 12px/18px "Noto Sans CJK SC", "Noto Sans", sans-serif;
}
button, input, select {
  font: inherit;
  color: inherit;
  background: none;
  border: 0;
  padding: 0;
  margin: 0;
}
button { display: flex; align-items: center; justify-content: center; white-space: nowrap; }
input, select { min-width: 0; outline: 0; }
select { appearance: none; }
select:disabled { opacity: 1; }
svg { display: block; flex: none; }
ul { list-style: none; margin: 0; padding: 0; }
table { border-collapse: collapse; table-layout: fixed; }
th, td { padding: 0; font-weight: 400; text-align: left; white-space: nowrap; }
button svg { color: #b4b4b4; }
button.dim svg { color: #4a4a4a; }
button.blue svg { color: #3f8fe8; }
.sprite { position: absolute; width: 0; height: 0; }
.lat { font-size: 11px; white-space: pre; }

.app {
  display: flex;
  flex-direction: column;
  min-height: 100vh;
  padding: 22px 0 18px;
}

/* title bar and menus */
.titlebar {
  display: flex;
  justify-content: space-between;
  height: 23px;
  background: #fff;
  color: #222;
}
.title { display: flex; align-items: center; gap: 5px; padding-left: 2px; }
.title h1 { margin: 0; font: 13px/20px "Open Sans", sans-serif; }
.logo {
  width: 16px;
  height: 15px;
  border: 1px solid #12b886;
  background: #06281f;
  color: #20d9a0;
  font: 10px/12px "Open Sans", sans-serif;
  text-align: center;
}
.winbtns { display: flex; padding-right: 2px; }
.winbtns button { width: 46px; }
.menubar {
  display: flex;
  gap: 15px;
  height: 21px;
  padding-left: 7px;
  background: #fff;
  color: #222;
}
.menubar button { font: 12px/18px "Open Sans", "Noto Sans CJK SC", sans-serif; }

/* tool bar */
.toolbar {
  display: flex;
  align-items: center;
  height: 25px;
  padding: 0 6px 2px 5px;
  background: #232323;
}
.grip { width: 2px; height: 18px; background: #343434; }
.vsep { width: 1px; height: 20px; background: #303030; }
.vsep.wide { margin: 0 18px 0 23px; }
.modes { display: flex; gap: 1px; margin-left: 5px; }
.mode { width: 65px; height: 20px; gap: 8px; padding-left: 1px; border: 1px solid #2b2b2b; }
.mode.on { color: #3f8fe8; background: #181818; }
.mode.on svg { color: #3f8fe8; }
.tools { display: flex; margin-left: 4px; }
.tools button { width: 27px; height: 20px; }
.tools .on { background: #181818; }
.tools .on svg { color: #4a90f0; }
.tools.views { margin: 0 5px 0 0; }
.workspaces { display: flex; gap: 43px; margin-left: auto; }
.workspaces .on { gap: 13px; color: #3f8fe8; }
.workspaces .on svg { color: #5a7ae0; }
.more { margin: 0 8px 0 18px; }
.help-search {
  display: flex;
  align-items: center;
  gap: 9px;
  width: 194px;
  height: 19px;
  margin-left: 4px;
  padding-left: 6px;
  border: 1px solid #2c2c2c;
  background: #181818;
  color: #c0c0c0;
}
.help-search input { flex: 1; }
.help-search input::placeholder { color: #c0c0c0; opacity: 1; }

/* panel frame */
.workspace {
  flex: 1;
  display: flex;
  gap: 4px;
  padding: 3px 0 2px 1px;
  background: #161616;
}
.left { flex: none; width: 485px; display: flex; flex-direction: column; gap: 4px; }
.right { flex: 1; min-width: 0; display: flex; flex-direction: column; gap: 3px; }
.upper { flex: 1; display: flex; gap: 4px; }
.lower { display: flex; gap: 4px; height: 100px; }
.panel { display: flex; flex-direction: column; min-width: 0; padding: 3px 5px 0; background: #232323; }
.files { flex: 258 1 0; }
.media { flex: 395 1 0; min-height: 0; }
.history { flex: 285 1 0; }
.tabs { display: flex; gap: 22px; padding: 0 6px; height: 24px; flex: none; }
.tab { padding-right: 18px; height: 24px; border-bottom: 2px solid transparent; }
.tab svg { color: #b0b0b0; }
.tab.on, .tab:has(svg) { padding: 0; gap: 10px; color: #b8b8b8; }
.tab.on { border-color: #b8b8b8; }

.bar { display: flex; align-items: center; height: 31px; flex: none; }
.bar-icons { display: flex; align-items: center; gap: 11px; padding-left: 5px; }
.file-search {
  display: flex;
  align-items: center;
  width: 197px;
  height: 19px;
  margin-left: auto;
  padding-left: 7px;
  border: 1px solid #2e2e2e;
  background: #191919;
}
.file-search input { flex: 1; }

.list { position: relative; flex: 1; overflow: hidden; background: #1d1d1d; border: 1px solid #2c2c2c; border-top: 0; }
.list table { width: 100%; }
.list th { height: 19px; line-height: 16px; vertical-align: top; overflow: hidden; background: #232323; border-bottom: 1px solid #303030; }
.list th svg { display: inline-block; margin-left: 1px; }
.list th + th { padding-left: 3px; border-left: 1px solid #2b2b2b; }
.list td { height: 19px; line-height: 18px; border-bottom: 1px solid #272727; overflow: hidden; }
.list th:first-child { padding-left: 5px; }
.c-name { width: 182px; }
.c-state { width: 41px; }
.c-time { width: 100px; }
.c-rate { width: 77px; }
.c-chan { width: 61px; }
.file-list td { color: #3f8ad8; padding-left: 5px; }
.file-list td.num, .fname span { font-size: 11px; }
.file-list td:nth-child(3) { padding-left: 13px; }
.file-list td.fname { display: flex; align-items: center; gap: 7px; padding-left: 30px; }
.fname svg { color: #a8a8a8; }
.hscroll {
  position: absolute;
  left: 0;
  bottom: 0;
  width: 36%;
  height: 10px;
  border-radius: 0 4px 4px 0;
  background: #303030;
}
.preview { display: flex; align-items: center; justify-content: center; gap: 18px; height: 32px; flex: none; padding-left: 6px; }
.preview button + button + button { margin-left: -4px; }
.preview button.dim svg { color: #555; }
.files .preview { padding: 0 0 1px 6px; }

/* media browser */
.media-bar { height: 30px; }
.ingest { margin: 0 99px 0 5px; }
.select { position: relative; display: flex; align-items: center; height: 18px; background: #191919; border: 1px solid #2c2c2c; }
.select select { width: 100%; padding: 0 6px; color: #b8b8b8; }
.select svg { position: absolute; right: 5px; color: #b0b0b0; pointer-events: none; }
.media-bar .select { width: 162px; margin: 0 11px 0 -1px; }
.media-bar button + button { margin-left: 14px; }
.media-bar .filter { margin: 0 7px 0 auto; }
.split { flex: 1; display: flex; min-height: 0; padding-bottom: 3px; }
.tree { position: relative; width: 114px; overflow: hidden; background: #1d1d1d; border: 1px solid #2c2c2c; margin-bottom: 2px; }
.tree li { display: flex; align-items: center; height: 19px; white-space: nowrap; }
.tree .top { padding-left: 5px; }
.tree .sub { padding-left: 27px; }
.tree .tw { color: #b0b0b0; width: 9px; }
.tree .tw + svg { margin: 0 7px 0 9px; color: #b0b0b0; }
.tree .hscroll { width: 70%; }
.divider { display: flex; flex-direction: column; align-items: center; width: 10px; padding: 17px 0 24px; background: #2f2f2f; }
.divider i { width: 3px; height: 26px; margin: auto 0; border: solid #777; border-width: 0 1px; }
.drives { flex: 1; min-width: 0; display: flex; flex-direction: column; }
.drive-list { border-left-color: #232323; }
.drive-list th { height: 20px; }
.d-name { width: 200px; }
.d-time { width: 101px; }
.drive-list th + th { padding-left: 5px; }
.drive-list th:nth-child(3) { border-left: 0; }
.drive { display: flex; align-items: center; font-size: 11px; padding-left: 5px; }
.list td.drive { overflow: visible; }
.drive svg { color: #b0b0b0; }
.drive svg + svg { margin: 0 6px 0 12px; }
.drive-list .hscroll { width: 27%; }

/* history */
.history-list { flex: 1; margin-top: 6px; background: #1d1d1d; border: 1px solid #2c2c2c; border-radius: 2px; }
.history-list li { display: flex; align-items: center; height: 18px; padding-left: 2px; background: #454545; color: #8c8c8c; }
.history-list svg { color: #c0c0c0; }
.history-list svg + svg { margin: 0 8px 0 10px; }
.undo { display: flex; align-items: center; justify-content: space-between; height: 30px; padding-right: 6px; }

/* editor */
.editor { flex: 1; position: relative; padding: 3px 8px 0 7px; }
.editor .tabs { padding: 0 4px; }
.navrow { display: flex; align-items: center; gap: 10px; margin-top: 8px; padding-right: 8px; }
.navigator { flex: 1; display: flex; justify-content: space-between; height: 31px; border: solid #5c5c5c; border-width: 2px 0; border-radius: 4px; background: #2e2e2e; }
.navigator i { width: 6px; border: 2px solid #5c5c5c; border-radius: 3px; }
.session { flex: 1; display: flex; margin-top: 16px; }
.tracks {
  position: relative;
  flex: 1;
  min-width: 0;
  display: grid;
  grid-template-columns: 223px 1fr;
  grid-template-rows: 26px 134px 1fr;
  border-bottom: 1px solid #2e2e2e;
}
.head { display: flex; justify-content: space-between; align-items: center; padding-bottom: 4px; grid-area: 1 / 1; }
.track-tools { display: flex; gap: 1px; padding-left: 1px; }
.track-tools button { width: 20px; height: 20px; background: #181818; }
.track-tools .fx { color: #b8b8b8; font: italic 15px/18px "Noto Sans", sans-serif; }
.snap-tools { display: flex; align-items: center; gap: 8px; padding-right: 12px; }
.ruler { grid-area: 1 / 2; overflow: hidden; border: 1px solid #111; border-width: 1px 1px 0 0; background: #202020; }
.labels { display: flex; justify-content: space-between; font-size: 11px; line-height: 16px; color: #a0a0a0; }
.labels span { display: flex; justify-content: center; width: 0; }
.labels .hms { justify-content: flex-start; padding-left: 2px; }
.ticks { width: 100%; height: 8px; overflow: visible; }
.ruler .ticks { height: 9px; }
.ticks path { stroke: #8a8a8a; vector-effect: non-scaling-stroke; shape-rendering: crispEdges; }
.track { grid-area: 2 / 1; display: flex; background: #2d2d2d; }
.stripe { display: flex; align-items: flex-end; width: 13px; padding: 2px 2px 3px; background: #4f86f7; }
.stripe i { width: 9px; height: 9px; border: 1px solid #14265a; }
.track-ctl { flex: 1; padding: 6px 6px 0 4px; }
.line { display: flex; align-items: center; height: 20px; }
.line > svg:first-child { color: #b0b0b0; }
.track-ctl > .line { padding-left: 4px; }
.tname { flex: 1; margin-left: 5px; font-size: 11px; }
.ms { font: 10px/14px "Noto Sans", sans-serif; color: #b8b8b8; }
.ms + .ms { margin: 0 3px 0 11px; }
.body { display: flex; justify-content: space-between; }
.ctl-rows { width: 178px; }
.vol svg + svg { margin-left: 4px; color: #888; }
.line.vol { height: 26px; }
.gain { margin-left: 5px; color: #3f8ad8; font-size: 11px; }
.vol .end { margin-left: auto; color: #a0a0a0; }
.field, .phase { height: 17px; background: #1c1c1c; }
.field { flex: 1; justify-content: space-between; margin: 0 3px 0 4px; padding: 0 6px; color: #b8b8b8; }
.phase { width: 18px; }
.auto { margin-top: 36px; }
.line .exp { margin: 0 11px 0 1px; }
.auto .select { flex: 1; height: 17px; border: 0; background: #1c1c1c; }
.vu { display: flex; justify-content: center; width: 17px; height: 93px; margin-top: 10px; border: 1px solid #111; background: #1c1c1c; }
.vu i { width: 1px; height: 9px; background: #111; }
.lane { grid-area: 2 / 2; background: #4d4d4d; border-right: 1px solid #333; }
.void { grid-area: 3 / 1 / 4 / 3; border: solid #2b2b2b; border-width: 1px 0 0 1px; }
.timeline { grid-area: 2 / 2 / 4 / 3; border-left: 1px solid #a52828; }
.playhead { position: absolute; left: 218px; top: 12px; }
.vscroll {
  display: flex;
  flex-direction: column;
  align-items: center;
  justify-content: space-between;
  width: 18px;
  margin-top: 26px;
  border: solid #5f5f5f;
  border-width: 0 2px;
  border-radius: 5px;
  background: #6f9af3;
}
.vscroll i { width: 14px; height: 6px; background: #5a5a5a; }
.transport { display: flex; align-items: center; height: 39px; margin-bottom: 1px; padding: 0 3px 0 4px; }
.transport output { width: 62px; font-size: 16px; line-height: 24px; color: #3f8ad8; margin-top: 2px; }
.play-btns { display: flex; margin-left: 243px; }
.play-btns button { width: 30px; }
.play-btns .rec svg { color: #6a2a30; }
.zoom-btns { display: flex; margin-left: auto; }
.zoom-btns button { width: 30px; }
.cursor { position: absolute; left: 88px; top: 127px; }

/* essential sound */
.sound { flex: none; width: 345px; padding: 3px 1px 0; }
.sound .tabs { padding: 0 11px; height: 26px; }
.nosel, .preset, .blank { border-top: 1px solid #333; padding: 0 11px; }
.nosel { line-height: 29px; height: 30px; }
.preset { display: flex; align-items: center; height: 36px; padding-bottom: 2px; color: #555; }
.preset .select { flex: 1; height: 20px; background: #272727; border: 0; }
.preset .select svg { color: #555; }
.blank { height: 32px; border-bottom: 1px solid #333; }
.types { display: flex; flex-direction: column; gap: 8px; padding: 18px 21px; }
.types p { margin: 3px 0 1px; line-height: 20px; }
.types button { height: 32px; border: 1px solid #2d2d2d; border-radius: 2px; color: #4c4c4c; padding: 0 7px 0 17px; }
.types button svg { color: #4c4c4c; }
.types span { width: 24px; margin: 0 auto 0 6px; }
.types button svg:first-child { margin-left: auto; }
.types button .go { margin-left: -6px; color: #a0a0a0; }

/* levels */
.lower .panel { padding-top: 2px; }
.levels { flex: 1; padding: 3px 6px 0; }
.levels .tabs { padding: 0 7px; }
.meter { display: flex; justify-content: space-between; height: 48px; margin-top: 6px; border: 1px solid #101010; background: #1d1d1d; }
.meter .peak { width: 1px; background: #e8e84a; }
.meter .clip { width: 8px; border-left: 1px solid #101010; }
.scale { margin: 0 11px 0 1px; }
.scale .ticks { height: 5px; }
.scale .labels { font-size: 10px; }
.labels .db { justify-content: flex-start; }

/* selection / view */
.selview { flex: none; width: 273px; }
.lower .selview { padding-right: 0; }
.selview table { width: 261px; margin: 1px 0 0 6px; }
.selview tr > :first-child { width: 48px; }
.selview tr { height: 22px; }
.selview tbody td { padding-left: 1px; color: #3f8ad8; font-size: 11px; }

/* status bar */
.status { display: flex; align-items: center; height: 20px; padding-left: 8px; background: #232323; }
.msg { flex: 1; }
.cell { height: 16px; line-height: 16px; border-left: 1px solid #303030; padding-left: 8px; white-space: nowrap; }
.cell small { font-size: 9px; }
.s1 { width: 51px; }
.s2 { width: 49px; }
.s3 { width: 125px; }
.s4 { width: 55px; }
.s5 { width: 66px; padding-left: 16px; }
.s6 { width: 85px; }
.s7 { width: 49px; }

.watermark {
  position: absolute;
  top: 10px;
  right: 10px;
  display: flex;
  align-items: center;
  color: rgba(140, 140, 140, .5);
  pointer-events: none;
}
.watermark span {
  font: 700 47px/48px "Noto Sans CJK SC", sans-serif;
  color: transparent;
  -webkit-text-stroke: 1px rgba(140, 140, 140, .5);
}
```
